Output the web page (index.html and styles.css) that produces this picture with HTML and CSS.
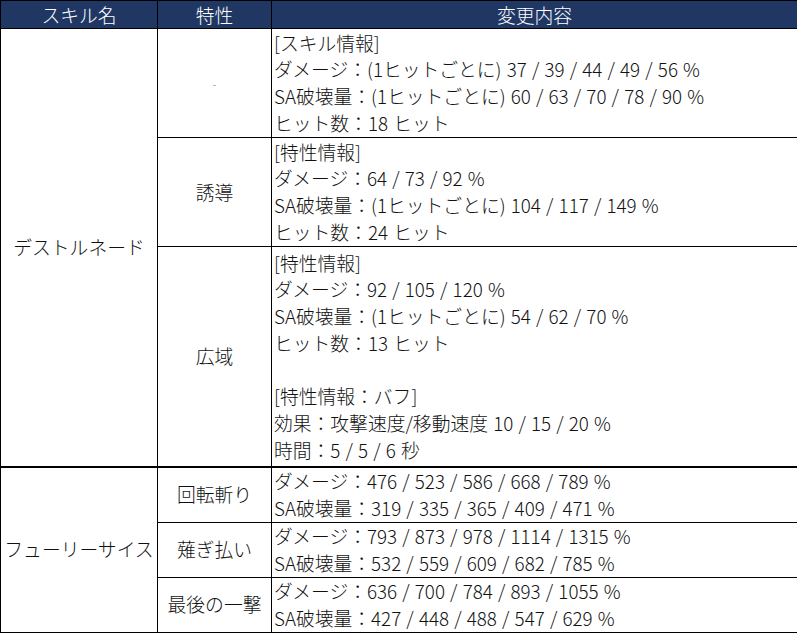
FILE: index.html
```html
<!DOCTYPE html>
<html lang="ja">
<head>
<meta charset="utf-8">
<title>スキル変更内容</title>
<link rel="stylesheet" href="styles.css">
</head>
<body>
<table class="skills">
  <colgroup>
    <col class="c-name">
    <col class="c-trait">
    <col class="c-change">
  </colgroup>
  <thead>
    <tr class="head">
      <th>スキル名</th>
      <th>特性</th>
      <th>変更内容</th>
    </tr>
  </thead>
  <tbody>
    <tr class="r4">
      <td class="name" rowspan="3">デストルネード</td>
      <td class="trait"><span class="dash">-</span></td>
      <td class="change">[スキル情報]<br>ダメージ：(1ヒットごとに) 37 / 39 / 44 / 49 / 56 %<br>SA破壊量：(1ヒットごとに) 60 / 63 / 70 / 78 / 90 %<br>ヒット数：18 ヒット</td>
    </tr>
    <tr class="r4">
      <td class="trait">誘導</td>
      <td class="change">[特性情報]<br>ダメージ：64 / 73 / 92 %<br>SA破壊量：(1ヒットごとに) 104 / 117 / 149 %<br>ヒット数：24 ヒット</td>
    </tr>
    <tr class="r8">
      <td class="trait">広域</td>
      <td class="change">[特性情報]<br>ダメージ：92 / 105 / 120 %<br>SA破壊量：(1ヒットごとに) 54 / 62 / 70 %<br>ヒット数：13 ヒット<br>&nbsp;<br>[特性情報：バフ]<br>効果：攻撃速度/移動速度 10 / 15 / 20 %<br>時間：5 / 5 / 6 秒</td>
    </tr>
    <tr class="r2 group">
      <td class="name" rowspan="3">フューリーサイス</td>
      <td class="trait">回転斬り</td>
      <td class="change">ダメージ：476 / 523 / 586 / 668 / 789 %<br>SA破壊量：319 / 335 / 365 / 409 / 471 %</td>
    </tr>
    <tr class="r2b">
      <td class="trait">薙ぎ払い</td>
      <td class="change">ダメージ：793 / 873 / 978 / 1114 / 1315 %<br>SA破壊量：532 / 559 / 609 / 682 / 785 %</td>
    </tr>
    <tr class="r2b">
      <td class="trait">最後の一撃</td>
      <td class="change">ダメージ：636 / 700 / 784 / 893 / 1055 %<br>SA破壊量：427 / 448 / 488 / 547 / 629 %</td>
    </tr>
  </tbody>
</table>
</body>
</html>
```
FILE: styles.css
```css
html, body {
  margin: 0;
  padding: 0;
  background: #ffffff;
}

.skills {
  border-collapse: collapse;
  table-layout: fixed;
  width: 797px;
  font-family: "Noto Sans CJK JP", "Noto Sans", sans-serif;
  font-size: 18.8px;
  font-weight: 300;
  color: #111;
  line-height: 26.75px;
}

.c-name { width: 157px; }
.c-trait { width: 114px; }
.c-change { width: 526px; }

.skills th,
.skills td {
  border: 1px solid #000;
  padding: 0 2px;
  vertical-align: middle;
}

.head th {
  background: #203764;
  color: #ffffff;
  font-weight: 300;
  height: 27px;
  padding: 0;
  text-align: center;
  line-height: 27px;
}

.name,
.trait {
  text-align: center;
  white-space: nowrap;
  padding: 0;
}

.change {
  text-align: left;
  white-space: nowrap;
  word-spacing: 1px;
}

.dash {
  color: #888;
  font-size: 12px;
}

.r4 td { height: 108px; }
.r8 td { height: 219px; }
.r2 td { height: 53px; }
.r2b td { height: 54px; }

.group td {
  border-top: 2px solid #000;
}
```
